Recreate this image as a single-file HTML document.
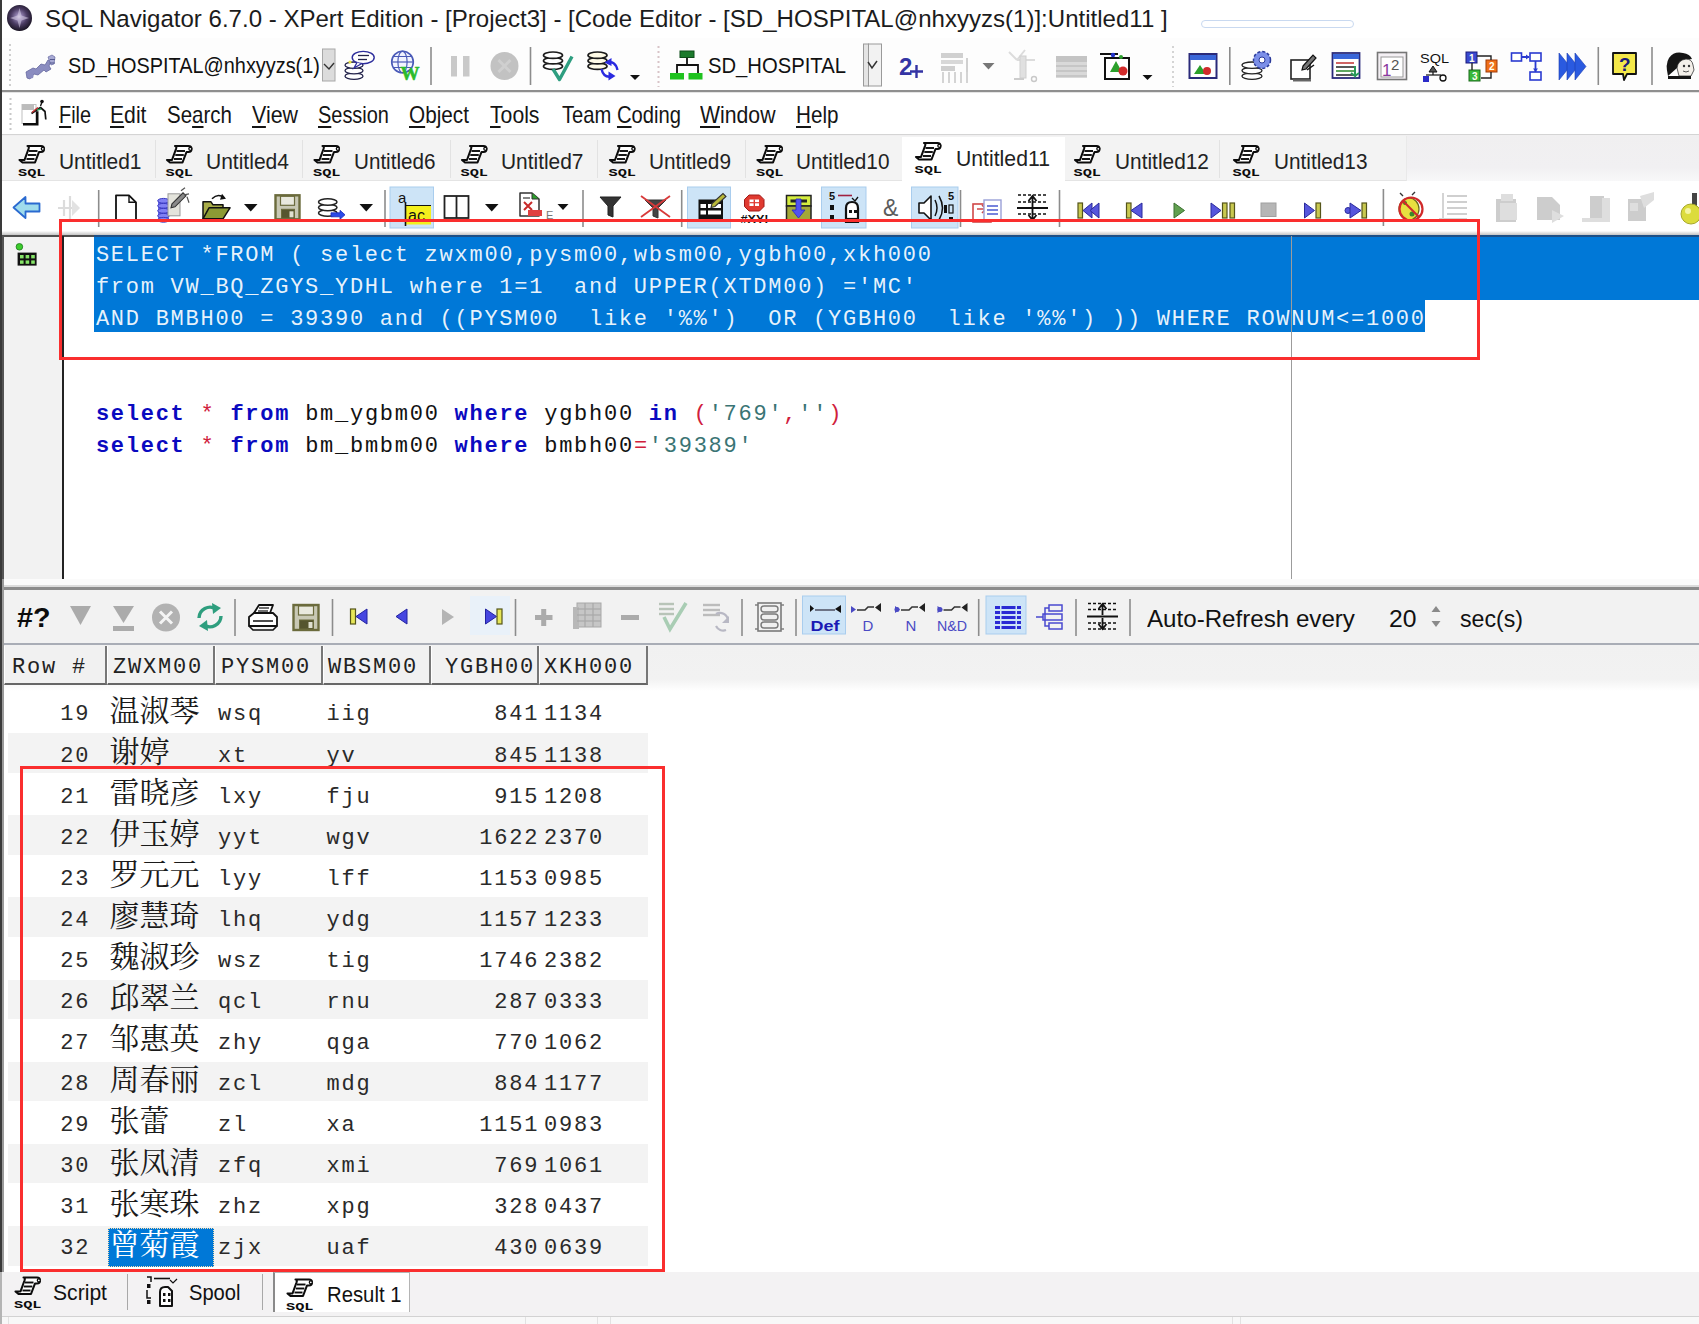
<!DOCTYPE html><html><head><meta charset="utf-8"><title>SQL Navigator</title><style>
*{box-sizing:border-box;margin:0;padding:0}
html,body{width:1699px;height:1324px;overflow:hidden;background:#fff}
body{position:relative;font-family:"Liberation Sans","Noto Sans CJK SC",sans-serif;color:#000}
.abs{position:absolute}
.t{position:absolute;white-space:pre;transform-origin:0 50%}
.code{position:absolute;white-space:pre;font-family:"Liberation Mono",monospace;font-size:22px;letter-spacing:1.74px;line-height:32px;height:32px;left:95.9px;color:#111}
.kw{color:#0a0ac0;font-weight:bold}
.op{color:#d0203c}
.st{color:#3a7474}
.sel{color:rgba(255,255,255,.92)}
u{text-decoration:underline;text-underline-offset:3px;text-decoration-thickness:1.5px}
.cell{position:absolute;white-space:pre;font-family:"Liberation Mono",monospace;font-size:22px;letter-spacing:1.8px;line-height:41px;height:41px;color:#2a2a2a}
.cn{font-family:"Liberation Serif","Noto Serif CJK SC",serif;font-size:30px;letter-spacing:0;color:#1a1a1a}
.hd{position:absolute;top:646px;height:39px;background:#f1f1f1;font-family:"Liberation Mono",monospace;font-size:22px;letter-spacing:1.8px;line-height:43.5px;white-space:pre;color:#222;border-right:2px solid #777;border-bottom:2px solid #666;border-left:1px solid #fff}
</style></head><body>
<div class="abs" style="left:0px;top:0px;width:1699px;height:38px;background:#fff;"></div>
<div class="abs" style="left:0px;top:38px;width:1699px;height:52px;background:#fdfdfd;"></div>
<div class="abs" style="left:0px;top:90px;width:1699px;height:2px;background:#8f8f8f;"></div>
<div class="abs" style="left:0px;top:92px;width:1699px;height:1px;background:#e4e4e4;"></div>
<div class="abs" style="left:0px;top:93px;width:1699px;height:42px;background:#fff;"></div>
<div class="abs" style="left:0px;top:133.5px;width:1699px;height:1.5px;background:#d4d4d4;"></div>
<div class="abs" style="left:0px;top:135px;width:1699px;height:45.5px;background:linear-gradient(#f0eff0,#f1f0f2 70%,#f8f8f9);"></div>
<div class="abs" style="left:0px;top:136px;width:1407px;height:44.5px;background:#f3f3f3;border-bottom:1px solid #e4e4e4;border-right:1px solid #e9e9e9"></div>
<div class="abs" style="left:155px;top:140px;width:1px;height:38px;background:#e2e2e2;"></div>
<div class="abs" style="left:302px;top:140px;width:1px;height:38px;background:#e2e2e2;"></div>
<div class="abs" style="left:450px;top:140px;width:1px;height:38px;background:#e2e2e2;"></div>
<div class="abs" style="left:597px;top:140px;width:1px;height:38px;background:#e2e2e2;"></div>
<div class="abs" style="left:745px;top:140px;width:1px;height:38px;background:#e2e2e2;"></div>
<div class="abs" style="left:1219px;top:140px;width:1px;height:38px;background:#e2e2e2;"></div>
<div class="abs" style="left:0px;top:181px;width:1699px;height:50px;background:#fff;"></div>
<div class="abs" style="left:7px;top:4.7px;width:25px;height:26.5px;border-radius:50%;background:radial-gradient(circle at 48% 45%,#cfc6de 0,#8f7fae 16%,#4a3b62 42%,#1c1626 72%,#0d0b12 100%)"></div>
<div class="t" style="left:44.5px;top:2.5px;font-size:24.5px;line-height:32px;transform:scaleX(0.9816);color:#1c1c1c">SQL Navigator 6.7.0 - XPert Edition - [Project3] - [Code Editor - [SD_HOSPITAL@nhxyyzs(1)]:Untitled11 ]</div>
<div class="abs" style="left:1201px;top:20px;width:153px;height:8px;border:1.5px solid #c9d9f0;border-radius:4px"></div>
<div class="t" style="left:68.2px;top:51.4px;font-size:22.6px;line-height:29px;transform:scaleX(0.8803);color:#111">SD_HOSPITAL@nhxyyzs(1)</div>
<div class="t" style="left:707.7px;top:51.4px;font-size:22.6px;line-height:29px;transform:scaleX(0.8957);color:#111">SD_HOSPITAL</div>
<div class="t" style="left:58.7px;top:99.5px;font-size:23.2px;line-height:30px;transform:scaleX(0.8560);color:#151515"><u>F</u>ile</div>
<div class="t" style="left:110.2px;top:99.5px;font-size:23.2px;line-height:30px;transform:scaleX(0.9130);color:#151515"><u>E</u>dit</div>
<div class="t" style="left:167.2px;top:99.5px;font-size:23.2px;line-height:30px;transform:scaleX(0.8842);color:#151515">Se<u>a</u>rch</div>
<div class="t" style="left:251.7px;top:99.5px;font-size:23.2px;line-height:30px;transform:scaleX(0.9224);color:#151515"><u>V</u>iew</div>
<div class="t" style="left:318.2px;top:99.5px;font-size:23.2px;line-height:30px;transform:scaleX(0.8602);color:#151515"><u>S</u>ession</div>
<div class="t" style="left:409.2px;top:99.5px;font-size:23.2px;line-height:30px;transform:scaleX(0.8948);color:#151515"><u>O</u>bject</div>
<div class="t" style="left:490.2px;top:99.5px;font-size:23.2px;line-height:30px;transform:scaleX(0.9139);color:#151515"><u>T</u>ools</div>
<div class="t" style="left:561.7px;top:99.5px;font-size:23.2px;line-height:30px;transform:scaleX(0.8705);color:#151515">Team <u>C</u>oding</div>
<div class="t" style="left:700.2px;top:99.5px;font-size:23.2px;line-height:30px;transform:scaleX(0.9150);color:#151515"><u>W</u>indow</div>
<div class="t" style="left:796.2px;top:99.5px;font-size:23.2px;line-height:30px;transform:scaleX(0.8907);color:#151515"><u>H</u>elp</div>
<div class="abs" style="left:902px;top:136.5px;width:163px;height:45px;background:#fff;"></div>
<div class="t" style="left:58.7px;top:147.9px;font-size:21.2px;line-height:28px;transform:scaleX(0.9860);color:#222">Untitled1</div>
<div class="t" style="left:206.2px;top:147.9px;font-size:21.2px;line-height:28px;transform:scaleX(0.9919);color:#222">Untitled4</div>
<div class="t" style="left:353.7px;top:147.9px;font-size:21.2px;line-height:28px;transform:scaleX(0.9740);color:#222">Untitled6</div>
<div class="t" style="left:501.2px;top:147.9px;font-size:21.2px;line-height:28px;transform:scaleX(0.9860);color:#222">Untitled7</div>
<div class="t" style="left:648.7px;top:147.9px;font-size:21.2px;line-height:28px;transform:scaleX(0.9800);color:#222">Untitled9</div>
<div class="t" style="left:796.2px;top:147.9px;font-size:21.2px;line-height:28px;transform:scaleX(0.9794);color:#222">Untitled10</div>
<div class="t" style="left:955.7px;top:144.9px;font-size:21.2px;line-height:28px;transform:scaleX(1.0012);color:#222">Untitled11</div>
<div class="t" style="left:1114.7px;top:147.9px;font-size:21.2px;line-height:28px;transform:scaleX(0.9847);color:#222">Untitled12</div>
<div class="t" style="left:1273.7px;top:147.9px;font-size:21.2px;line-height:28px;transform:scaleX(0.9794);color:#222">Untitled13</div>
<div class="abs" style="left:0px;top:230.5px;width:1699px;height:4px;background:linear-gradient(#fdfdfd,#c4c4c4);"></div>
<div class="abs" style="left:0px;top:234.5px;width:1699px;height:2.2px;background:#505050;"></div>
<div class="abs" style="left:2px;top:236.5px;width:61px;height:343px;background:#f2f2f2;"></div>
<div class="abs" style="left:1.5px;top:236px;width:2px;height:343px;background:#555;"></div>
<div class="abs" style="left:62.4px;top:236px;width:2px;height:343px;background:#222;"></div>
<div class="abs" style="left:64.4px;top:236.7px;width:1635px;height:342.3px;background:#fff;"></div>
<div class="abs" style="left:94px;top:236.5px;width:1605px;height:63.5px;background:#0078d7;"></div>
<div class="abs" style="left:94px;top:234.5px;width:1605px;height:2.2px;background:#1d4f86;"></div>
<div class="abs" style="left:94px;top:300px;width:1331px;height:32px;background:#0078d7;"></div>
<div class="abs" style="left:1291px;top:236px;width:1.3px;height:343px;background:#9c9c9c;"></div>
<div class="code" style="top:240.3px"><span class="sel">SELECT *FROM ( select zwxm00,pysm00,wbsm00,ygbh00,xkh000</span></div>
<div class="code" style="top:272.3px"><span class="sel">from VW_BQ_ZGYS_YDHL where 1=1  and UPPER(XTDM00) ='MC'</span></div>
<div class="code" style="top:304.3px"><span class="sel">AND BMBH00 = 39390 and ((PYSM00  like '%%')  OR (YGBH00  like '%%') )) WHERE ROWNUM&lt;=1000</span></div>
<div class="code" style="top:399.3px"><span class="kw">select</span> <span class="op">*</span> <span class="kw">from</span> bm_ygbm00 <span class="kw">where</span> ygbh00 <span class="kw">in</span> <span class="op">(</span><span class="st">'769'</span><span class="op">,</span><span class="st">''</span><span class="op">)</span></div>
<div class="code" style="top:431.3px"><span class="kw">select</span> <span class="op">*</span> <span class="kw">from</span> bm_bmbm00 <span class="kw">where</span> bmbh00<span class="op">=</span><span class="st">'39389'</span></div>
<div class="abs" style="left:0px;top:579px;width:1699px;height:6px;background:#fbfbfb;"></div>
<div class="abs" style="left:0px;top:585px;width:1699px;height:2px;background:#dcdcdc;"></div>
<div class="abs" style="left:0px;top:587px;width:1699px;height:2.5px;background:#8c8c8c;"></div>
<div class="abs" style="left:0px;top:589.5px;width:1699px;height:54px;background:#f2f2f2;"></div>
<div class="abs" style="left:0px;top:643px;width:1699px;height:2px;background:#a9adb6;"></div>
<div class="t" style="left:16.7px;top:599.7px;font-size:27.5px;line-height:36px;transform:scaleX(1.0438);font-weight:bold;color:#0c0c0c">#?</div>
<div class="t" style="left:1146.7px;top:604.4px;font-size:23.4px;line-height:30px;transform:scaleX(1.0318);color:#111">Auto-Refresh every</div>
<div class="t" style="left:1389.2px;top:603.9px;font-size:23.4px;line-height:30px;transform:scaleX(1.0565);color:#111">20</div>
<div class="t" style="left:1460.2px;top:604.4px;font-size:23.4px;line-height:30px;transform:scaleX(0.9890);color:#111">sec(s)</div>
<div class="abs" style="left:0px;top:645px;width:1699px;height:627px;background:#fff;"></div>
<div class="abs" style="left:0px;top:645px;width:1699px;height:46px;background:linear-gradient(#f1f1f1,#f2f2f2 74%,#fff);"></div>
<div class="hd" style="left:4px;width:103px;padding-left:7px">Row #</div>
<div class="hd" style="left:107px;width:108px;padding-left:5px">ZWXM00</div>
<div class="hd" style="left:215px;width:108px;padding-left:5px">PYSM00</div>
<div class="hd" style="left:323px;width:108px;padding-left:4px">WBSM00</div>
<div class="hd" style="left:431px;width:108px;padding-left:13px">YGBH00</div>
<div class="hd" style="left:539px;width:109px;padding-left:4px">XKH000</div>
<div class="cell" style="left:8px;width:82.3px;text-align:right;top:694.4px">19</div>
<div class="cell cn" style="left:109.5px;top:689.6px;">温淑琴</div>
<div class="cell" style="left:218px;top:694.4px">wsq</div>
<div class="cell" style="left:326.5px;top:694.4px">iig</div>
<div class="cell" style="left:431px;width:108.3px;text-align:right;top:694.4px">841</div>
<div class="cell" style="left:544px;top:694.4px">1134</div>
<div class="abs" style="left:8px;top:733.1px;width:640px;height:39.5px;background:#f3f3f3;"></div>
<div class="cell" style="left:8px;width:82.3px;text-align:right;top:735.5px">20</div>
<div class="cell cn" style="left:109.5px;top:730.7px;">谢婷</div>
<div class="cell" style="left:218px;top:735.5px">xt</div>
<div class="cell" style="left:326.5px;top:735.5px">yv</div>
<div class="cell" style="left:431px;width:108.3px;text-align:right;top:735.5px">845</div>
<div class="cell" style="left:544px;top:735.5px">1138</div>
<div class="cell" style="left:8px;width:82.3px;text-align:right;top:776.6px">21</div>
<div class="cell cn" style="left:109.5px;top:771.8px;">雷晓彦</div>
<div class="cell" style="left:218px;top:776.6px">lxy</div>
<div class="cell" style="left:326.5px;top:776.6px">fju</div>
<div class="cell" style="left:431px;width:108.3px;text-align:right;top:776.6px">915</div>
<div class="cell" style="left:544px;top:776.6px">1208</div>
<div class="abs" style="left:8px;top:815.2px;width:640px;height:39.5px;background:#f3f3f3;"></div>
<div class="cell" style="left:8px;width:82.3px;text-align:right;top:817.6px">22</div>
<div class="cell cn" style="left:109.5px;top:812.8px;">伊玉婷</div>
<div class="cell" style="left:218px;top:817.6px">yyt</div>
<div class="cell" style="left:326.5px;top:817.6px">wgv</div>
<div class="cell" style="left:431px;width:108.3px;text-align:right;top:817.6px">1622</div>
<div class="cell" style="left:544px;top:817.6px">2370</div>
<div class="cell" style="left:8px;width:82.3px;text-align:right;top:858.7px">23</div>
<div class="cell cn" style="left:109.5px;top:853.9px;">罗元元</div>
<div class="cell" style="left:218px;top:858.7px">lyy</div>
<div class="cell" style="left:326.5px;top:858.7px">lff</div>
<div class="cell" style="left:431px;width:108.3px;text-align:right;top:858.7px">1153</div>
<div class="cell" style="left:544px;top:858.7px">0985</div>
<div class="abs" style="left:8px;top:897.4px;width:640px;height:39.5px;background:#f3f3f3;"></div>
<div class="cell" style="left:8px;width:82.3px;text-align:right;top:899.8px">24</div>
<div class="cell cn" style="left:109.5px;top:895.0px;">廖慧琦</div>
<div class="cell" style="left:218px;top:899.8px">lhq</div>
<div class="cell" style="left:326.5px;top:899.8px">ydg</div>
<div class="cell" style="left:431px;width:108.3px;text-align:right;top:899.8px">1157</div>
<div class="cell" style="left:544px;top:899.8px">1233</div>
<div class="cell" style="left:8px;width:82.3px;text-align:right;top:940.9px">25</div>
<div class="cell cn" style="left:109.5px;top:936.1px;">魏淑珍</div>
<div class="cell" style="left:218px;top:940.9px">wsz</div>
<div class="cell" style="left:326.5px;top:940.9px">tig</div>
<div class="cell" style="left:431px;width:108.3px;text-align:right;top:940.9px">1746</div>
<div class="cell" style="left:544px;top:940.9px">2382</div>
<div class="abs" style="left:8px;top:979.6px;width:640px;height:39.5px;background:#f3f3f3;"></div>
<div class="cell" style="left:8px;width:82.3px;text-align:right;top:982.0px">26</div>
<div class="cell cn" style="left:109.5px;top:977.2px;">邱翠兰</div>
<div class="cell" style="left:218px;top:982.0px">qcl</div>
<div class="cell" style="left:326.5px;top:982.0px">rnu</div>
<div class="cell" style="left:431px;width:108.3px;text-align:right;top:982.0px">287</div>
<div class="cell" style="left:544px;top:982.0px">0333</div>
<div class="cell" style="left:8px;width:82.3px;text-align:right;top:1023.0px">27</div>
<div class="cell cn" style="left:109.5px;top:1018.2px;">邹惠英</div>
<div class="cell" style="left:218px;top:1023.0px">zhy</div>
<div class="cell" style="left:326.5px;top:1023.0px">qga</div>
<div class="cell" style="left:431px;width:108.3px;text-align:right;top:1023.0px">770</div>
<div class="cell" style="left:544px;top:1023.0px">1062</div>
<div class="abs" style="left:8px;top:1061.7px;width:640px;height:39.5px;background:#f3f3f3;"></div>
<div class="cell" style="left:8px;width:82.3px;text-align:right;top:1064.1px">28</div>
<div class="cell cn" style="left:109.5px;top:1059.3px;">周春丽</div>
<div class="cell" style="left:218px;top:1064.1px">zcl</div>
<div class="cell" style="left:326.5px;top:1064.1px">mdg</div>
<div class="cell" style="left:431px;width:108.3px;text-align:right;top:1064.1px">884</div>
<div class="cell" style="left:544px;top:1064.1px">1177</div>
<div class="cell" style="left:8px;width:82.3px;text-align:right;top:1105.2px">29</div>
<div class="cell cn" style="left:109.5px;top:1100.4px;">张蕾</div>
<div class="cell" style="left:218px;top:1105.2px">zl</div>
<div class="cell" style="left:326.5px;top:1105.2px">xa</div>
<div class="cell" style="left:431px;width:108.3px;text-align:right;top:1105.2px">1151</div>
<div class="cell" style="left:544px;top:1105.2px">0983</div>
<div class="abs" style="left:8px;top:1143.9px;width:640px;height:39.5px;background:#f3f3f3;"></div>
<div class="cell" style="left:8px;width:82.3px;text-align:right;top:1146.3px">30</div>
<div class="cell cn" style="left:109.5px;top:1141.5px;">张凤清</div>
<div class="cell" style="left:218px;top:1146.3px">zfq</div>
<div class="cell" style="left:326.5px;top:1146.3px">xmi</div>
<div class="cell" style="left:431px;width:108.3px;text-align:right;top:1146.3px">769</div>
<div class="cell" style="left:544px;top:1146.3px">1061</div>
<div class="cell" style="left:8px;width:82.3px;text-align:right;top:1187.4px">31</div>
<div class="cell cn" style="left:109.5px;top:1182.6px;">张寒珠</div>
<div class="cell" style="left:218px;top:1187.4px">zhz</div>
<div class="cell" style="left:326.5px;top:1187.4px">xpg</div>
<div class="cell" style="left:431px;width:108.3px;text-align:right;top:1187.4px">328</div>
<div class="cell" style="left:544px;top:1187.4px">0437</div>
<div class="abs" style="left:8px;top:1226.0px;width:640px;height:39.5px;background:#f3f3f3;"></div>
<div class="abs" style="left:107.8px;top:1227.6px;width:105.8px;height:39.2px;background:#0078d7;outline:1px dotted #f6e0b0;outline-offset:-1px"></div>
<div class="cell" style="left:8px;width:82.3px;text-align:right;top:1228.4px">32</div>
<div class="cell cn" style="left:109.5px;top:1223.6px;color:#fff;">曾菊霞</div>
<div class="cell" style="left:218px;top:1228.4px">zjx</div>
<div class="cell" style="left:326.5px;top:1228.4px">uaf</div>
<div class="cell" style="left:431px;width:108.3px;text-align:right;top:1228.4px">430</div>
<div class="cell" style="left:544px;top:1228.4px">0639</div>
<div class="abs" style="left:0px;top:1272px;width:1699px;height:40px;background:#f3f2f3;"></div>
<div class="abs" style="left:272.5px;top:1272px;width:137px;height:40px;background:#fff;border:1px solid #b4b4b4;border-bottom:none;border-left:2px solid #8a8a8a"></div>
<div class="t" style="left:52.7px;top:1278.4px;font-size:22.3px;line-height:29px;transform:scaleX(0.9473);color:#111">Script</div>
<div class="t" style="left:189.2px;top:1278.4px;font-size:22.3px;line-height:29px;transform:scaleX(0.9029);color:#111">Spool</div>
<div class="t" style="left:326.7px;top:1279.9px;font-size:22.3px;line-height:29px;transform:scaleX(0.9107);color:#111">Result 1</div>
<div class="abs" style="left:126.5px;top:1274px;width:1.2px;height:36px;background:#a8a8a8;"></div>
<div class="abs" style="left:261.5px;top:1274px;width:1.2px;height:36px;background:#a8a8a8;"></div>
<div class="abs" style="left:0px;top:1312px;width:1699px;height:12px;background:#f3f2f3;"></div>
<div class="abs" style="left:0px;top:1315.5px;width:1699px;height:1px;background:#d2d2d2;"></div>
<div class="abs" style="left:0px;top:1316.5px;width:1699px;height:7.5px;background:#f8f8f8;"></div>
<div class="abs" style="left:8px;top:1317px;width:1px;height:7px;background:#e2e2e2;"></div>
<div class="abs" style="left:525px;top:1317px;width:1px;height:7px;background:#e2e2e2;"></div>
<div class="abs" style="left:597px;top:1317px;width:1px;height:7px;background:#e2e2e2;"></div>
<div class="abs" style="left:610px;top:1317px;width:1px;height:7px;background:#e2e2e2;"></div>
<div class="abs" style="left:1232px;top:1317px;width:1px;height:7px;background:#e2e2e2;"></div>
<div class="abs" style="left:1240px;top:1317px;width:1px;height:7px;background:#e2e2e2;"></div>
<div class="abs" style="left:0px;top:0px;width:1.5px;height:1272px;background:#3a3a3a;"></div>
<div class="abs" style="left:0px;top:1272px;width:1.5px;height:52px;background:#b4b4b4;"></div>
<div class="abs" style="left:1.5px;top:579px;width:2.5px;height:693px;background:#9a9a9a;"></div>
<svg class="abs" style="left:0;top:0" width="1699" height="1324" viewBox="0 0 1699 1324"><path d="M19.5 8l2 7.5 7.5 2.5-7.5 2.5-2 7.5-2-7.5-7.5-2.5 7.5-2.5z" fill="#d9d0e8" stroke="none" stroke-width="0" opacity="0.55"/><line x1="10" y1="44" x2="10" y2="88" stroke="#cfcfcf" stroke-width="2" stroke-dasharray="2 3"/><path d="M26 72l7-4 3 1 5-5 4 1 3-5 3 1-2 5 2 3-5 3-2-2-6 5-4-1-4 5-3-1z" fill="#8a8cc0" stroke="#6668a0" stroke-width="0.8" /><path d="M48 57l4-2 3 2-1 7-3 1z" fill="#a8aad4" stroke="#6668a0" stroke-width="0.7" /><line x1="50" y1="59.5" x2="55" y2="59.5" stroke="#555a90" stroke-width="1" /><line x1="50" y1="63" x2="55" y2="63" stroke="#555a90" stroke-width="1" /><circle cx="31" cy="76" r="2.5" fill="#8a8cc0" stroke="none" stroke-width="1" /><rect x="322.5" y="49" width="12.5" height="32" fill="#dcdcdc" stroke="#a8a8a8" stroke-width="1" /><path d="M324 64l5 5 5-6" fill="none" stroke="#333" stroke-width="1.4" /><ellipse cx="354.0" cy="76.2" rx="9.0" ry="3.2" fill="#fff" stroke="#22224a" stroke-width="1.3" /><ellipse cx="354.0" cy="70.7" rx="9.0" ry="3.2" fill="#fff" stroke="#22224a" stroke-width="1.3" /><ellipse cx="354.0" cy="65.2" rx="9.0" ry="3.2" fill="#fff" stroke="#22224a" stroke-width="1.3" /><circle cx="350" cy="62" r="1.6" fill="#e8e040" stroke="none" stroke-width="1" /><ellipse cx="363.2" cy="57.6" rx="11" ry="6.2" fill="#fff" stroke="#2d2d9c" stroke-width="1.4" /><path d="M357 62.5l-3 5.5 7-4" fill="#fff" stroke="#2d2d9c" stroke-width="1.3" /><line x1="358" y1="55.5" x2="369" y2="55.5" stroke="#22224a" stroke-width="1.3" /><line x1="358" y1="59.5" x2="367" y2="59.5" stroke="#22224a" stroke-width="1.3" /><circle cx="402.5" cy="62" r="10.8" fill="#f2f4ff" stroke="#4a5ab8" stroke-width="1.6" /><ellipse cx="402.5" cy="62" rx="4.6" ry="10.8" fill="none" stroke="#4a5ab8" stroke-width="1.2" /><line x1="391.7" y1="62" x2="413.3" y2="62" stroke="#4a5ab8" stroke-width="1.2" /><line x1="393" y1="56.5" x2="412" y2="56.5" stroke="#4a5ab8" stroke-width="1" /><line x1="393" y1="67.5" x2="412" y2="67.5" stroke="#4a5ab8" stroke-width="1" /><text x="400.5" y="80" font-size="19" fill="#2cbc2c" font-family="Liberation Serif, serif" font-weight="bold" stroke="#2cbc2c" stroke-width="0.5">W</text><line x1="431" y1="47" x2="431" y2="85" stroke="#8c8c8c" stroke-width="1.6" /><rect x="451" y="56" width="6" height="20.5" fill="#c9c9c9" stroke="none" stroke-width="1" /><rect x="463" y="56" width="6.5" height="20.5" fill="#c9c9c9" stroke="none" stroke-width="1" /><circle cx="504.5" cy="66" r="14" fill="#c2c2c2" stroke="none" stroke-width="1" /><path d="M498.5 60l12 12M510.5 60l-12 12" fill="none" stroke="#cfcfcf" stroke-width="3" /><line x1="530.5" y1="47" x2="530.5" y2="85" stroke="#8c8c8c" stroke-width="1.6" /><ellipse cx="553.0" cy="66.2" rx="9.5" ry="3.2" fill="#fff" stroke="#1c1c1c" stroke-width="1.7" /><ellipse cx="553.0" cy="60.7" rx="9.5" ry="3.2" fill="#fff" stroke="#1c1c1c" stroke-width="1.7" /><ellipse cx="553.0" cy="55.2" rx="9.5" ry="3.2" fill="#fff" stroke="#1c1c1c" stroke-width="1.7" /><path d="M553 69l6.5 10.5 12.5-23" fill="none" stroke="#2e9e80" stroke-width="3.4" stroke-linejoin="round"/><ellipse cx="597.5" cy="66.2" rx="9.5" ry="3.2" fill="#fffbe6" stroke="#1c1c1c" stroke-width="1.7" /><ellipse cx="597.5" cy="60.7" rx="9.5" ry="3.2" fill="#fffbe6" stroke="#1c1c1c" stroke-width="1.7" /><ellipse cx="597.5" cy="55.2" rx="9.5" ry="3.2" fill="#fffbe6" stroke="#1c1c1c" stroke-width="1.7" /><path d="M607 63q8-3 10.5 7" fill="none" stroke="#2a2ae0" stroke-width="2.4" /><path d="M604.5 62.5l7-4.5 0 8z" fill="#2a2ae0" stroke="none" stroke-width="1" /><path d="M601.5 69q2 9 10 7.5" fill="none" stroke="#2a2ae0" stroke-width="2.4" /><path d="M615.5 76l-7-4.5 0 9z" fill="#2a2ae0" stroke="none" stroke-width="1" /><path d="M630 75h10l-5.0 5z" fill="#111" stroke="none" stroke-width="1" /><line x1="658.5" y1="46" x2="658.5" y2="87" stroke="#d8c4c8" stroke-width="2" stroke-dasharray="2 3"/><rect x="680" y="51" width="14" height="6.5" fill="#1c7a2c" stroke="#0d4d18" stroke-width="1" /><path d="M687 58v7M677 73v-8h21v8" fill="none" stroke="#111" stroke-width="1.8" /><rect x="670" y="73" width="14" height="6.5" fill="#1fc21f" stroke="none" stroke-width="1" /><rect x="688.5" y="73" width="14" height="6.5" fill="#1fc21f" stroke="none" stroke-width="1" /><rect x="863.5" y="44" width="5" height="42" fill="#e4e4e4" stroke="#9a9a9a" stroke-width="1" /><rect x="868.5" y="44" width="13" height="42" fill="#f2f2f2" stroke="#9a9a9a" stroke-width="1" /><path d="M868 62l4 6 5-7" fill="none" stroke="#333" stroke-width="1.5" /><text x="899" y="75" font-size="24" fill="#3434a4" font-family="Liberation Sans, sans-serif" font-weight="bold">2</text><path d="M910 71.5h13M916.5 65v13" fill="none" stroke="#3434a4" stroke-width="2.4" /><rect x="941" y="53" width="22" height="5" fill="#d0d0d0" stroke="none" stroke-width="1" /><rect x="941" y="60" width="22" height="4" fill="#d8d8d8" stroke="none" stroke-width="1" /><rect x="941" y="66" width="14" height="5" fill="#cfcfcf" stroke="none" stroke-width="1" /><line x1="943" y1="72" x2="943" y2="83" stroke="#d4d4d4" stroke-width="2" /><line x1="949" y1="72" x2="949" y2="83" stroke="#d4d4d4" stroke-width="2" /><line x1="955" y1="72" x2="955" y2="83" stroke="#d4d4d4" stroke-width="2" /><line x1="961" y1="72" x2="961" y2="83" stroke="#d4d4d4" stroke-width="2" /><line x1="967" y1="72" x2="967" y2="83" stroke="#d4d4d4" stroke-width="2" /><line x1="967" y1="58" x2="967" y2="72" stroke="#d0d0d0" stroke-width="2" /><path d="M982.5 63h12l-6.0 6.5z" fill="#777" stroke="none" stroke-width="1" /><path d="M1009 52l8 8M1025 50l-8 10M1017 60h18" fill="none" stroke="#dcdcdc" stroke-width="2" /><rect x="1020" y="56" width="6" height="22" fill="#e0e0e0" stroke="#cfcfcf" stroke-width="1" /><circle cx="1034" cy="79" r="2.5" fill="none" stroke="#c8c8c8" stroke-width="1.4" /><line x1="1014" y1="79" x2="1024" y2="79" stroke="#ccc" stroke-width="2" /><rect x="1056" y="56" width="31" height="22" fill="#d9d9d9" stroke="none" stroke-width="1" /><rect x="1056" y="56" width="31" height="6" fill="#c4c4c4" stroke="none" stroke-width="1" /><line x1="1056" y1="66" x2="1087" y2="66" stroke="#bdbdbd" stroke-width="1.4" /><line x1="1056" y1="71" x2="1087" y2="71" stroke="#bdbdbd" stroke-width="1.4" /><line x1="1056" y1="76" x2="1087" y2="76" stroke="#bdbdbd" stroke-width="1.4" /><rect x="1105" y="58" width="24" height="21" fill="#fff" stroke="#111" stroke-width="2" /><path d="M1100 54h18" fill="none" stroke="#111" stroke-width="2" /><path d="M1110 72l6-11 6 11z" fill="#2ca02c" stroke="none" stroke-width="1" /><circle cx="1123" cy="71" r="4.5" fill="#d12a2a" stroke="none" stroke-width="1" /><circle cx="1113" cy="55" r="2.2" fill="#2233cc" stroke="none" stroke-width="1" /><circle cx="1121" cy="57" r="2" fill="#2ca02c" stroke="none" stroke-width="1" /><path d="M1142.5 75h10l-5.0 5z" fill="#111" stroke="none" stroke-width="1" /><line x1="1173" y1="46" x2="1173" y2="87" stroke="#d4d4d4" stroke-width="2" stroke-dasharray="2 3"/><rect x="1189.5" y="54" width="27" height="24" fill="#fff" stroke="#2a2a7a" stroke-width="2" /><rect x="1190" y="55" width="26" height="5" fill="#3a66d8" stroke="none" stroke-width="1" /><path d="M1194 74l6-9 6 9z" fill="#2ca02c" stroke="none" stroke-width="1" /><circle cx="1207" cy="71" r="4" fill="#d12a2a" stroke="none" stroke-width="1" /><line x1="1229.8" y1="47" x2="1229.8" y2="85" stroke="#8c8c8c" stroke-width="1.6" /><ellipse cx="1252.0" cy="76.2" rx="10.0" ry="3.2" fill="#fff" stroke="#222" stroke-width="1.3" /><ellipse cx="1252.0" cy="70.7" rx="10.0" ry="3.2" fill="#fff" stroke="#222" stroke-width="1.3" /><ellipse cx="1252.0" cy="65.2" rx="10.0" ry="3.2" fill="#fff" stroke="#222" stroke-width="1.3" /><circle cx="1262" cy="60" r="8.5" fill="#7b8fe8" stroke="#2a3a9a" stroke-width="1.5" stroke-dasharray="3 2"/><circle cx="1262" cy="60" r="3" fill="#fff" stroke="#2a3a9a" stroke-width="1" /><rect x="1291" y="60" width="19" height="19" fill="#fff" stroke="#222" stroke-width="1.6" /><line x1="1293" y1="80.5" x2="1311" y2="80.5" stroke="#666" stroke-width="2" /><path d="M1303 66l10-11 3 3-10 11-4 1z" fill="#777" stroke="#111" stroke-width="1.2" /><path d="M1307 70l7-5" fill="none" stroke="#111" stroke-width="1.5" /><rect x="1332.5" y="53" width="27" height="25" fill="#fff" stroke="#2a2a7a" stroke-width="1.8" /><rect x="1333" y="54" width="26" height="5" fill="#3a66d8" stroke="none" stroke-width="1" /><line x1="1336" y1="63" x2="1354" y2="63" stroke="#c03030" stroke-width="1.5" /><line x1="1336" y1="67" x2="1354" y2="67" stroke="#222" stroke-width="1.5" /><line x1="1336" y1="71" x2="1354" y2="71" stroke="#2a8a2a" stroke-width="1.5" /><line x1="1336" y1="75" x2="1354" y2="75" stroke="#222" stroke-width="1.5" /><path d="M1355 66v10l-4-3M1355 76l4-3" fill="none" stroke="#2a9a5a" stroke-width="2" /><rect x="1377.5" y="52.5" width="29" height="27" fill="#f4f0f4" stroke="#777" stroke-width="1.6" /><rect x="1381" y="57" width="22" height="20" fill="#fff" stroke="#999" stroke-width="1" /><text x="1382" y="76" font-size="17" fill="#8a3aa0" font-family="Liberation Sans, sans-serif" >1</text><text x="1391" y="70" font-size="15" fill="#555" font-family="Liberation Sans, sans-serif" >2</text><text x="1420" y="62.5" font-size="12.5" fill="#111" font-family="Liberation Sans, sans-serif" textLength="29" lengthAdjust="spacingAndGlyphs">SQL</text><path d="M1433 66l4 6h-8z" fill="#555" stroke="#111" stroke-width="1" /><line x1="1433" y1="72" x2="1433" y2="75" stroke="#111" stroke-width="1.2" /><line x1="1426" y1="75" x2="1441" y2="75" stroke="#111" stroke-width="1.2" /><rect x="1423" y="76" width="6" height="6" fill="#2a2ac8" stroke="none" stroke-width="1" /><circle cx="1443" cy="78" r="3" fill="#fff" stroke="#111" stroke-width="1.3" /><rect x="1466" y="52" width="11" height="11" fill="#3a4ad0" stroke="#1a1a7a" stroke-width="1" /><text x="1469" y="61.5" font-size="10" fill="#ffe" font-family="Liberation Sans, sans-serif" font-weight="bold">1</text><rect x="1486" y="60" width="11" height="12" fill="#f07018" stroke="#a03a08" stroke-width="1" /><text x="1489" y="70" font-size="10" fill="#ffe" font-family="Liberation Sans, sans-serif" font-weight="bold">2</text><rect x="1469" y="70" width="11" height="11" fill="#3ab83a" stroke="#1a6a1a" stroke-width="1" /><text x="1472" y="79.5" font-size="10" fill="#ffe" font-family="Liberation Sans, sans-serif" font-weight="bold">3</text><path d="M1477 56h14v4M1472 63v7M1491 72v6h-10" fill="none" stroke="#222" stroke-width="1.4" /><rect x="1511.5" y="53" width="10" height="8" fill="#fff" stroke="#2a3ad0" stroke-width="1.6" /><rect x="1530" y="53" width="11" height="8" fill="#fff" stroke="#2a3ad0" stroke-width="1.6" /><rect x="1530" y="72" width="11" height="8" fill="#fff" stroke="#2a3ad0" stroke-width="1.6" /><path d="M1522 57h7M1535.5 61v11" fill="none" stroke="#2a3ad0" stroke-width="1.8" /><path d="M1526 54.5l3.5 2.5-3.5 2.5zM1533 68.5l2.5 3.5 2.5-3.5z" fill="#2a3ad0" stroke="none" stroke-width="1" /><path d="M1559 53l11 13.5-11 13.5z" fill="#2a5ae0" stroke="#1a3ab0" stroke-width="0.6" /><path d="M1567 53l11 13.5-11 13.5z" fill="#2a5ae0" stroke="#1a3ab0" stroke-width="0.6" /><path d="M1575 53l11 13.5-11 13.5z" fill="#2a5ae0" stroke="#1a3ab0" stroke-width="0.6" /><line x1="1598.3" y1="47" x2="1598.3" y2="85" stroke="#8c8c8c" stroke-width="1.6" /><path d="M1613 53h23v21h-9l-3 6-1-6h-10z" fill="#f4e84a" stroke="#111" stroke-width="1.8" stroke-linejoin="round"/><text x="1619" y="71" font-size="19" fill="#1a1a7a" font-family="Liberation Sans, sans-serif" font-weight="bold">?</text><line x1="1652" y1="47" x2="1652" y2="85" stroke="#8c8c8c" stroke-width="1.6" /><path d="M1668 76q-3-12 1-18q5-7 14-5q7 1 9 6l-6 1q-8 1-9 8z" fill="#151515" stroke="none" stroke-width="1" /><path d="M1677 68q1-8 9-9q6 0 7 6l1 5-3 6h-12z" fill="#f4f0ea" stroke="#333" stroke-width="0.8" /><circle cx="1684" cy="66" r="1.2" fill="#333" stroke="none" stroke-width="1" /><circle cx="1689" cy="66" r="1.2" fill="#333" stroke="none" stroke-width="1" /><path d="M1683 71q3 2 6 0" fill="none" stroke="#555" stroke-width="1" /><rect x="1668" y="76" width="23" height="3" fill="#151515" stroke="none" stroke-width="1" /><line x1="10.5" y1="98" x2="10.5" y2="130" stroke="#c8c8c8" stroke-width="2" stroke-dasharray="2 3"/><rect x="22" y="104.5" width="14" height="19" fill="#fff" stroke="#c0c0c0" stroke-width="1" /><rect x="22" y="104.5" width="12" height="5.5" fill="#bcbcbc" stroke="none" stroke-width="1" /><path d="M23 124.3h14.2v-13" fill="none" stroke="#0c0c0c" stroke-width="2.6" /><path d="M31.5 113.5l9-6 4.5 4 0.8 8" fill="none" stroke="#111" stroke-width="1.7" stroke-linejoin="round"/><line x1="32" y1="112.5" x2="38" y2="107.5" stroke="#c03030" stroke-width="1.6" /><line x1="37" y1="110" x2="41" y2="109" stroke="#2ca05c" stroke-width="1.4" /><circle cx="42" cy="101.5" r="1.8" fill="#0c0c0c" stroke="none" stroke-width="1" /><line x1="42" y1="102" x2="40.5" y2="106" stroke="#111" stroke-width="1.4" /><path d="M27.5 146h13.5q3 0 3 3t-3 3h-2l-4 10.5h-12.5l-3-2.5h5l4-11q1-3-1-3z" fill="#fff" stroke="#0c0c0c" stroke-width="2.1" stroke-linejoin="round"/><circle cx="42.8" cy="148.8" r="1.5" fill="#fff" stroke="#0c0c0c" stroke-width="1.3" /><line x1="29.0" y1="151" x2="37.5" y2="151" stroke="#0c0c0c" stroke-width="1.9" /><line x1="27.8" y1="155" x2="36.3" y2="155" stroke="#0c0c0c" stroke-width="1.9" /><line x1="26.5" y1="159" x2="34.5" y2="159" stroke="#0c0c0c" stroke-width="1.9" /><text x="18.0" y="176" font-size="10.5" fill="#0c0c0c" font-family="Liberation Mono, monospace" font-weight="bold" textLength="27.5" lengthAdjust="spacingAndGlyphs">SQL</text><path d="M175 146h13.5q3 0 3 3t-3 3h-2l-4 10.5h-12.5l-3-2.5h5l4-11q1-3-1-3z" fill="#fff" stroke="#0c0c0c" stroke-width="2.1" stroke-linejoin="round"/><circle cx="190.3" cy="148.8" r="1.5" fill="#fff" stroke="#0c0c0c" stroke-width="1.3" /><line x1="176.5" y1="151" x2="185" y2="151" stroke="#0c0c0c" stroke-width="1.9" /><line x1="175.3" y1="155" x2="183.8" y2="155" stroke="#0c0c0c" stroke-width="1.9" /><line x1="174" y1="159" x2="182" y2="159" stroke="#0c0c0c" stroke-width="1.9" /><text x="165.5" y="176" font-size="10.5" fill="#0c0c0c" font-family="Liberation Mono, monospace" font-weight="bold" textLength="27.5" lengthAdjust="spacingAndGlyphs">SQL</text><path d="M322.5 146h13.5q3 0 3 3t-3 3h-2l-4 10.5h-12.5l-3-2.5h5l4-11q1-3-1-3z" fill="#fff" stroke="#0c0c0c" stroke-width="2.1" stroke-linejoin="round"/><circle cx="337.8" cy="148.8" r="1.5" fill="#fff" stroke="#0c0c0c" stroke-width="1.3" /><line x1="324.0" y1="151" x2="332.5" y2="151" stroke="#0c0c0c" stroke-width="1.9" /><line x1="322.8" y1="155" x2="331.3" y2="155" stroke="#0c0c0c" stroke-width="1.9" /><line x1="321.5" y1="159" x2="329.5" y2="159" stroke="#0c0c0c" stroke-width="1.9" /><text x="313.0" y="176" font-size="10.5" fill="#0c0c0c" font-family="Liberation Mono, monospace" font-weight="bold" textLength="27.5" lengthAdjust="spacingAndGlyphs">SQL</text><path d="M470 146h13.5q3 0 3 3t-3 3h-2l-4 10.5h-12.5l-3-2.5h5l4-11q1-3-1-3z" fill="#fff" stroke="#0c0c0c" stroke-width="2.1" stroke-linejoin="round"/><circle cx="485.3" cy="148.8" r="1.5" fill="#fff" stroke="#0c0c0c" stroke-width="1.3" /><line x1="471.5" y1="151" x2="480" y2="151" stroke="#0c0c0c" stroke-width="1.9" /><line x1="470.3" y1="155" x2="478.8" y2="155" stroke="#0c0c0c" stroke-width="1.9" /><line x1="469" y1="159" x2="477" y2="159" stroke="#0c0c0c" stroke-width="1.9" /><text x="460.5" y="176" font-size="10.5" fill="#0c0c0c" font-family="Liberation Mono, monospace" font-weight="bold" textLength="27.5" lengthAdjust="spacingAndGlyphs">SQL</text><path d="M618 146h13.5q3 0 3 3t-3 3h-2l-4 10.5h-12.5l-3-2.5h5l4-11q1-3-1-3z" fill="#fff" stroke="#0c0c0c" stroke-width="2.1" stroke-linejoin="round"/><circle cx="633.3" cy="148.8" r="1.5" fill="#fff" stroke="#0c0c0c" stroke-width="1.3" /><line x1="619.5" y1="151" x2="628" y2="151" stroke="#0c0c0c" stroke-width="1.9" /><line x1="618.3" y1="155" x2="626.8" y2="155" stroke="#0c0c0c" stroke-width="1.9" /><line x1="617" y1="159" x2="625" y2="159" stroke="#0c0c0c" stroke-width="1.9" /><text x="608.5" y="176" font-size="10.5" fill="#0c0c0c" font-family="Liberation Mono, monospace" font-weight="bold" textLength="27.5" lengthAdjust="spacingAndGlyphs">SQL</text><path d="M765.5 146h13.5q3 0 3 3t-3 3h-2l-4 10.5h-12.5l-3-2.5h5l4-11q1-3-1-3z" fill="#fff" stroke="#0c0c0c" stroke-width="2.1" stroke-linejoin="round"/><circle cx="780.8" cy="148.8" r="1.5" fill="#fff" stroke="#0c0c0c" stroke-width="1.3" /><line x1="767.0" y1="151" x2="775.5" y2="151" stroke="#0c0c0c" stroke-width="1.9" /><line x1="765.8" y1="155" x2="774.3" y2="155" stroke="#0c0c0c" stroke-width="1.9" /><line x1="764.5" y1="159" x2="772.5" y2="159" stroke="#0c0c0c" stroke-width="1.9" /><text x="756.0" y="176" font-size="10.5" fill="#0c0c0c" font-family="Liberation Mono, monospace" font-weight="bold" textLength="27.5" lengthAdjust="spacingAndGlyphs">SQL</text><path d="M1083 146h13.5q3 0 3 3t-3 3h-2l-4 10.5h-12.5l-3-2.5h5l4-11q1-3-1-3z" fill="#fff" stroke="#0c0c0c" stroke-width="2.1" stroke-linejoin="round"/><circle cx="1098.3" cy="148.8" r="1.5" fill="#fff" stroke="#0c0c0c" stroke-width="1.3" /><line x1="1084.5" y1="151" x2="1093" y2="151" stroke="#0c0c0c" stroke-width="1.9" /><line x1="1083.3" y1="155" x2="1091.8" y2="155" stroke="#0c0c0c" stroke-width="1.9" /><line x1="1082" y1="159" x2="1090" y2="159" stroke="#0c0c0c" stroke-width="1.9" /><text x="1073.5" y="176" font-size="10.5" fill="#0c0c0c" font-family="Liberation Mono, monospace" font-weight="bold" textLength="27.5" lengthAdjust="spacingAndGlyphs">SQL</text><path d="M1242 146h13.5q3 0 3 3t-3 3h-2l-4 10.5h-12.5l-3-2.5h5l4-11q1-3-1-3z" fill="#fff" stroke="#0c0c0c" stroke-width="2.1" stroke-linejoin="round"/><circle cx="1257.3" cy="148.8" r="1.5" fill="#fff" stroke="#0c0c0c" stroke-width="1.3" /><line x1="1243.5" y1="151" x2="1252" y2="151" stroke="#0c0c0c" stroke-width="1.9" /><line x1="1242.3" y1="155" x2="1250.8" y2="155" stroke="#0c0c0c" stroke-width="1.9" /><line x1="1241" y1="159" x2="1249" y2="159" stroke="#0c0c0c" stroke-width="1.9" /><text x="1232.5" y="176" font-size="10.5" fill="#0c0c0c" font-family="Liberation Mono, monospace" font-weight="bold" textLength="27.5" lengthAdjust="spacingAndGlyphs">SQL</text><path d="M924 143h13.5q3 0 3 3t-3 3h-2l-4 10.5h-12.5l-3-2.5h5l4-11q1-3-1-3z" fill="#fff" stroke="#0c0c0c" stroke-width="2.1" stroke-linejoin="round"/><circle cx="939.3" cy="145.8" r="1.5" fill="#fff" stroke="#0c0c0c" stroke-width="1.3" /><line x1="925.5" y1="148" x2="934" y2="148" stroke="#0c0c0c" stroke-width="1.9" /><line x1="924.3" y1="152" x2="932.8" y2="152" stroke="#0c0c0c" stroke-width="1.9" /><line x1="923" y1="156" x2="931" y2="156" stroke="#0c0c0c" stroke-width="1.9" /><text x="914.5" y="173" font-size="10.5" fill="#0c0c0c" font-family="Liberation Mono, monospace" font-weight="bold" textLength="27.5" lengthAdjust="spacingAndGlyphs">SQL</text><path d="M13.5 207.5l12-10.5v6.5h14v8h-14v6.5z" fill="#9fdcec" stroke="#2a6ad0" stroke-width="1.8" stroke-linejoin="round"/><path d="M58 208h14M70 196v24M64 200v16" fill="none" stroke="#dcdcdc" stroke-width="2.2" /><path d="M72 200l8 8-8 8z" fill="#e2e2e2" stroke="none" stroke-width="1" /><line x1="98.7" y1="190" x2="98.7" y2="227" stroke="#8c8c8c" stroke-width="1.6" /><g transform="translate(0,-2.2)"><path d="M116 197.5h13l7 7v18h-20z" fill="#fff" stroke="#111" stroke-width="1.8" stroke-linejoin="round"/><path d="M129 197.5v7h7" fill="none" stroke="#111" stroke-width="1.4" /><rect x="158" y="203" width="11" height="17" fill="#6a6aec" stroke="none" stroke-width="1" /><ellipse cx="163.5" cy="203" rx="5.8" ry="2.4" fill="#8080f4" stroke="#3a3ac0" stroke-width="1" /><ellipse cx="163.5" cy="208" rx="5.8" ry="2.4" fill="#8080f4" stroke="#3a3ac0" stroke-width="1" /><ellipse cx="163.5" cy="213" rx="5.8" ry="2.4" fill="#8080f4" stroke="#3a3ac0" stroke-width="1" /><ellipse cx="163.5" cy="218" rx="5.8" ry="2.4" fill="#8080f4" stroke="#3a3ac0" stroke-width="1" /><ellipse cx="163.5" cy="222" rx="5.8" ry="2.4" fill="#8080f4" stroke="#3a3ac0" stroke-width="1" /><rect x="168" y="196" width="12" height="22" fill="#e4e4dc" stroke="#999" stroke-width="1" /><path d="M172 206l11-11 3 3-11 11-4 1z" fill="#8a8a8a" stroke="#333" stroke-width="1.1" /><path d="M181 193l4-3M187 199l2 6M184 197l5-1" fill="none" stroke="#555" stroke-width="1.2" /><path d="M203 221v-17h8l2 3h10v14z" fill="#a8ac48" stroke="#111" stroke-width="1.5" stroke-linejoin="round"/><path d="M203 221l6-11h21l-7 11z" fill="#8c9a34" stroke="#111" stroke-width="1.5" stroke-linejoin="round"/><path d="M212 201q6-6 12-1" fill="none" stroke="#111" stroke-width="1.6" /><path d="M222 196l4 5-6 1z" fill="#111" stroke="none" stroke-width="1" /><rect x="275.5" y="197.5" width="24" height="24" fill="#c8c8b4" stroke="#6b6b3c" stroke-width="2.4" /><rect x="280.5" y="198.5" width="14" height="9" fill="#e9e9de" stroke="#6b6b3c" stroke-width="1.2" /><rect x="281.5" y="211.5" width="13" height="9" fill="#55552f" stroke="#6b6b3c" stroke-width="1" /><rect x="289.5" y="213.5" width="4" height="6" fill="#e0e0d0" stroke="none" stroke-width="1" /><ellipse cx="327.75" cy="215.2" rx="9.25" ry="3.2" fill="#fff" stroke="#222" stroke-width="1.5" /><ellipse cx="327.75" cy="209.7" rx="9.25" ry="3.2" fill="#fff" stroke="#222" stroke-width="1.5" /><ellipse cx="327.75" cy="204.2" rx="9.25" ry="3.2" fill="#fff" stroke="#222" stroke-width="1.5" /><path d="M331 215h9v-2.5l5 4.5-5 4.5v-2.5h-9z" fill="#2a4ae8" stroke="#1a2ab8" stroke-width="0.8" /></g><path d="M244 204h13.5l-6.75 7.5z" fill="#111" stroke="none" stroke-width="1" /><path d="M359.5 204h13.5l-6.75 7.5z" fill="#111" stroke="none" stroke-width="1" /><line x1="385" y1="190" x2="385" y2="227" stroke="#8c8c8c" stroke-width="1.6" /><rect x="390" y="187" width="43.5" height="41" fill="#cde4f7" stroke="#a9cdee" stroke-width="1" /><text x="398" y="203" font-size="15" fill="#111" font-family="Liberation Sans, sans-serif" >a</text><rect x="406" y="205.5" width="25" height="19" fill="#f4f01c" stroke="none" stroke-width="1" /><line x1="405.5" y1="203" x2="405.5" y2="226" stroke="#111" stroke-width="1.6" /><line x1="405.5" y1="205.5" x2="431" y2="205.5" stroke="#111" stroke-width="1" /><text x="408" y="221" font-size="16" fill="#111" font-family="Liberation Sans, sans-serif" >ac</text><rect x="444.5" y="196" width="24" height="22" fill="#fff" stroke="#222" stroke-width="1.8" /><line x1="456.5" y1="196" x2="456.5" y2="218" stroke="#222" stroke-width="1.8" /><path d="M485 204h13.5l-6.75 7.5z" fill="#111" stroke="none" stroke-width="1" /><path d="M520 193h12l7 6v17h-19z" fill="#fff" stroke="#333" stroke-width="1.5" stroke-linejoin="round"/><path d="M532 193v6h7" fill="#2ca02c" stroke="#333" stroke-width="1" /><path d="M524 202l8 8M532 202l-8 8" fill="none" stroke="#c82a2a" stroke-width="2" /><rect x="528" y="210" width="14" height="6" fill="#e04040" stroke="none" stroke-width="1" /><line x1="523" y1="198" x2="530" y2="198" stroke="#333" stroke-width="1.2" /><text x="546" y="219" font-size="11" fill="#777" font-family="Liberation Sans, sans-serif" >E</text><path d="M557.5 204h11l-5.5 6z" fill="#111" stroke="none" stroke-width="1" /><line x1="583" y1="190" x2="583" y2="227" stroke="#8c8c8c" stroke-width="1.6" /><path d="M600 197h21l-8 9v11l-5-2v-9z" fill="#333" stroke="#222" stroke-width="1" /><path d="M645 200h21l-8 8v10l-5-2v-8z" fill="#444" stroke="#333" stroke-width="1" /><path d="M641 196l29 21M670 196l-29 21" fill="none" stroke="#d83a3a" stroke-width="1.8" /><line x1="681.7" y1="190" x2="681.7" y2="227" stroke="#8c8c8c" stroke-width="1.6" /><rect x="687.5" y="187" width="43" height="41" fill="#cde4f7" stroke="#a9cdee" stroke-width="1" /><rect x="698.5" y="199.5" width="24.5" height="20" fill="#111" stroke="none" stroke-width="1" /><rect x="700.5" y="204" width="5.5" height="4" fill="#fff" stroke="none" stroke-width="1" /><rect x="708" y="204" width="13" height="4" fill="#fff" stroke="none" stroke-width="1" /><rect x="700.5" y="210.5" width="5.5" height="4" fill="#fff" stroke="none" stroke-width="1" /><rect x="708" y="210.5" width="13" height="4" fill="#fff" stroke="none" stroke-width="1" /><path d="M712 203.5l11-10 3 3-11 10-4 1z" fill="#b8b83a" stroke="#333" stroke-width="1.1" /><path d="M749 195h10.5l4.5 4.5v7l-4.5 4.5h-10.5l-4.5-4.5v-7z" fill="#e03a30" stroke="#a01a18" stroke-width="1" /><rect x="749.5" y="199.5" width="9.5" height="6.5" fill="#fff" stroke="none" stroke-width="1" /><line x1="754.3" y1="199.5" x2="754.3" y2="206" stroke="#e03a30" stroke-width="1.4" /><line x1="749.5" y1="202.7" x2="759" y2="202.7" stroke="#e03a30" stroke-width="1.2" /><text x="740.5" y="222.5" font-size="10.5" fill="#111" font-family="Liberation Sans, sans-serif" font-weight="bold" textLength="28" lengthAdjust="spacingAndGlyphs">#XY!</text><rect x="786.5" y="195.5" width="24.5" height="10.5" fill="#d4ec40" stroke="#222" stroke-width="1.5" /><rect x="786.5" y="206" width="24.5" height="14" fill="#a4a838" stroke="#222" stroke-width="1.5" /><rect x="790.5" y="199.5" width="16.5" height="3" fill="#222" stroke="none" stroke-width="1" /><path d="M796 199h5v11h4l-6.5 8-6.5-8h4z" fill="#5252f0" stroke="#2a2ac0" stroke-width="0.8" /><rect x="821.5" y="187" width="44.5" height="41" fill="#cde4f7" stroke="#a9cdee" stroke-width="1" /><text x="829" y="200" font-size="11" fill="#111" font-family="Liberation Sans, sans-serif" font-weight="bold">5</text><line x1="838" y1="195.5" x2="852" y2="195.5" stroke="#a02040" stroke-width="1.6" /><path d="M852 198l3 3 3-4" fill="none" stroke="#111" stroke-width="1.3" /><rect x="830" y="205" width="4" height="5" fill="#111" stroke="none" stroke-width="1" /><rect x="830" y="215" width="4" height="5" fill="#111" stroke="none" stroke-width="1" /><path d="M846 222v-14q0-6 6-6t6 6v14z" fill="#fff" stroke="#111" stroke-width="2.2" /><rect x="849" y="210" width="3" height="3" fill="#111" stroke="none" stroke-width="1" /><rect x="854" y="210" width="3" height="3" fill="#111" stroke="none" stroke-width="1" /><path d="M845 219h14" fill="none" stroke="#111" stroke-width="2.2" /><text x="883" y="216" font-size="23" fill="#5c5c5c" font-family="Liberation Sans, sans-serif" >&amp;</text><rect x="911.5" y="187" width="46.5" height="41" fill="#cde4f7" stroke="#a9cdee" stroke-width="1" /><path d="M919 203h5l7-7v24l-7-7h-5z" fill="#fff" stroke="#111" stroke-width="1.6" stroke-linejoin="round"/><path d="M935 200q4 8 0 16M939 196q7 12 0 24" fill="none" stroke="#111" stroke-width="1.5" /><text x="948" y="200" font-size="11" fill="#111" font-family="Liberation Sans, sans-serif" font-weight="bold">5</text><rect x="944" y="205" width="3" height="8" fill="#111" stroke="none" stroke-width="1" /><rect x="949" y="205" width="4" height="8" fill="none" stroke="#111" stroke-width="1.2" /><rect x="949" y="217" width="4" height="4" fill="#111" stroke="none" stroke-width="1" /><line x1="960.5" y1="190" x2="960.5" y2="227" stroke="#8c8c8c" stroke-width="1.6" /><rect x="973" y="204" width="18" height="18" fill="#fff" stroke="#d04848" stroke-width="1.6" /><path d="M977 209h8M982 205l4 4-4 4" fill="none" stroke="#d04848" stroke-width="1.6" /><rect x="984" y="200" width="17" height="20" fill="#fff" stroke="#9aa0d8" stroke-width="1.4" /><line x1="987" y1="206" x2="998" y2="206" stroke="#4a5ad0" stroke-width="1.5" /><line x1="987" y1="210" x2="998" y2="210" stroke="#4a5ad0" stroke-width="1.5" /><line x1="987" y1="214" x2="998" y2="214" stroke="#4a5ad0" stroke-width="1.5" /><line x1="1018" y1="195" x2="1047" y2="195" stroke="#111" stroke-width="1.6" stroke-dasharray="3 2"/><line x1="1018" y1="202" x2="1047" y2="202" stroke="#111" stroke-width="1.6" stroke-dasharray="3 2"/><line x1="1018" y1="214" x2="1047" y2="214" stroke="#111" stroke-width="1.6" stroke-dasharray="3 2"/><line x1="1018" y1="221" x2="1047" y2="221" stroke="#111" stroke-width="1.6" stroke-dasharray="3 2"/><line x1="1017" y1="208" x2="1048" y2="208" stroke="#111" stroke-width="2" /><path d="M1032.5 207v-10M1028.5 201l4-5 4 5M1032.5 209v10M1028.5 215l4 5 4-5" fill="none" stroke="#111" stroke-width="1.8" /><line x1="1059.5" y1="190" x2="1059.5" y2="227" stroke="#8c8c8c" stroke-width="1.6" /><rect x="1078" y="203" width="4.5" height="15" fill="#c8c850" stroke="#55551a" stroke-width="1.2" /><path d="M1092 203v15l-9-7.5z" fill="#5656dc" stroke="#2a2a9c" stroke-width="1" /><path d="M1099 203v15l-9-7.5z" fill="#5656dc" stroke="#2a2a9c" stroke-width="1" /><rect x="1126.5" y="203" width="4.5" height="15" fill="#c8c850" stroke="#55551a" stroke-width="1.2" /><path d="M1142 203v15l-11-7.5z" fill="#5656dc" stroke="#2a2a9c" stroke-width="1" /><path d="M1174 203v15l10.5-7.5z" fill="#62a050" stroke="#3a7030" stroke-width="1" /><path d="M1211 203v15l10-7.5z" fill="#5656dc" stroke="#2a2a9c" stroke-width="1" /><rect x="1222.5" y="203" width="4.5" height="15" fill="#c8c850" stroke="#55551a" stroke-width="1.2" /><rect x="1230" y="203" width="4.5" height="15" fill="#c8c850" stroke="#55551a" stroke-width="1.2" /><rect x="1261" y="203" width="15" height="13.5" fill="#b6b6b6" stroke="#a0a0a0" stroke-width="1" /><path d="M1304.5 203v15l10-7.5z" fill="#5656dc" stroke="#2a2a9c" stroke-width="1" /><rect x="1316" y="203" width="4.5" height="15" fill="#c8c850" stroke="#55551a" stroke-width="1.2" /><circle cx="1348" cy="210.5" r="3" fill="#5656dc" stroke="#2a2a9c" stroke-width="1" /><path d="M1350 203v15l11-7.5z" fill="#5656dc" stroke="#2a2a9c" stroke-width="1" /><rect x="1362" y="203" width="4.5" height="15" fill="#c8c850" stroke="#55551a" stroke-width="1.2" /><line x1="1383.4" y1="189" x2="1383.4" y2="226" stroke="#8c8c8c" stroke-width="1.6" /><ellipse cx="1409" cy="209" rx="10" ry="11" fill="#e8e040" stroke="#6a6a1a" stroke-width="1.2" /><circle cx="1405" cy="203" r="2" fill="#3a8a2a" stroke="none" stroke-width="1" /><circle cx="1412" cy="214" r="2.5" fill="#3a8a2a" stroke="none" stroke-width="1" /><path d="M1403 196l-3-3M1412 195l3-3" fill="none" stroke="#333" stroke-width="1.4" /><circle cx="1411" cy="209" r="11.5" fill="none" stroke="#d02a2a" stroke-width="2.2" /><line x1="1403" y1="201" x2="1419" y2="217" stroke="#d02a2a" stroke-width="2.2" /><line x1="1447" y1="196" x2="1467" y2="196" stroke="#cfcfcf" stroke-width="2" /><line x1="1447" y1="202" x2="1467" y2="202" stroke="#cfcfcf" stroke-width="2" /><line x1="1447" y1="208" x2="1467" y2="208" stroke="#cfcfcf" stroke-width="2" /><line x1="1447" y1="214" x2="1467" y2="214" stroke="#cfcfcf" stroke-width="2" /><line x1="1443" y1="193" x2="1443" y2="218" stroke="#d4d4d4" stroke-width="2" /><line x1="1439" y1="219" x2="1467" y2="219" stroke="#d4d4d4" stroke-width="2" /><rect x="1496" y="199" width="20" height="23" fill="#cdcdcd" stroke="none" stroke-width="1" /><rect x="1501" y="194" width="12" height="7" fill="#dedede" stroke="none" stroke-width="1" /><rect x="1500" y="203" width="17" height="17" fill="#dedede" stroke="none" stroke-width="1" /><path d="M1537 197h15l8 8v15h-23z" fill="#cdcdcd" stroke="none" stroke-width="1" /><path d="M1552 210l12 6-12 7z" fill="#dedede" stroke="none" stroke-width="1" /><path d="M1590 196h14v22h-14z" fill="#cdcdcd" stroke="none" stroke-width="1" /><path d="M1582 218h28v4h-28z" fill="#dedede" stroke="none" stroke-width="1" /><path d="M1602 198h8v20h-8z" fill="#dedede" stroke="none" stroke-width="1" /><rect x="1628" y="199" width="18" height="22" fill="#cdcdcd" stroke="none" stroke-width="1" /><path d="M1640 196l14-4v8l-10 8z" fill="#dedede" stroke="none" stroke-width="1" /><rect x="1630" y="203" width="8" height="8" fill="#dedede" stroke="none" stroke-width="1" /><rect x="1692" y="193" width="5" height="16" fill="#444" stroke="none" stroke-width="1" /><circle cx="1691" cy="214" r="10" fill="#dcdc3c" stroke="#a8a82a" stroke-width="1" /><circle cx="1688" cy="211" r="3" fill="#f4f4a0" stroke="none" stroke-width="1" /><path d="M70 606h21l-10.5 19z" fill="#ababab" stroke="none" stroke-width="1" /><path d="M113 606h21l-10.5 17z" fill="#ababab" stroke="none" stroke-width="1" /><rect x="113" y="626" width="21" height="5" fill="#ababab" stroke="none" stroke-width="1" /><circle cx="166" cy="617.5" r="14" fill="#b2b2b2" stroke="none" stroke-width="1" /><path d="M160 611.5l12 12M172 611.5l-12 12" fill="none" stroke="#f4f4f4" stroke-width="3" /><path d="M199 618a11 11 0 0 1 17-9" fill="none" stroke="#2e9e7e" stroke-width="3.4" /><path d="M212 603l9 5-8 6z" fill="#2e9e7e" stroke="none" stroke-width="1" /><path d="M221 616a11 11 0 0 1-17 9" fill="none" stroke="#2e9e7e" stroke-width="3.4" /><path d="M208 631l-9-5 8-6z" fill="#2e9e7e" stroke="none" stroke-width="1" /><line x1="235" y1="599" x2="235" y2="636" stroke="#8c8c8c" stroke-width="1.6" /><path d="M254 613l5-8h14l-3 8z" fill="#fff" stroke="#111" stroke-width="1.8" stroke-linejoin="round"/><path d="M249 626v-9l5-4h19l4 4v9z" fill="#fff" stroke="#111" stroke-width="1.8" stroke-linejoin="round"/><path d="M249 626l4 4h20l4-4M253 621h20" fill="none" stroke="#111" stroke-width="1.6" /><line x1="259" y1="608" x2="269" y2="608" stroke="#111" stroke-width="1.2" /><line x1="258" y1="611" x2="268" y2="611" stroke="#111" stroke-width="1.2" /><rect x="293.5" y="605" width="25" height="25" fill="#c8c8b4" stroke="#6b6b3c" stroke-width="2.4" /><rect x="298.5" y="606" width="15" height="9" fill="#e9e9de" stroke="#6b6b3c" stroke-width="1.2" /><rect x="299.5" y="620" width="14" height="9" fill="#55552f" stroke="#6b6b3c" stroke-width="1" /><rect x="308.5" y="622" width="4" height="6" fill="#e0e0d0" stroke="none" stroke-width="1" /><line x1="332.5" y1="599" x2="332.5" y2="636" stroke="#8c8c8c" stroke-width="1.6" /><rect x="350.5" y="609" width="5" height="15" fill="#e6e658" stroke="#55551a" stroke-width="1.2" /><path d="M367 609v15l-11-7.5z" fill="#4646e0" stroke="#2222a0" stroke-width="1" /><path d="M407 609v15l-11-7.5z" fill="#4646e0" stroke="#2222a0" stroke-width="1" /><path d="M442 609v16l12-8z" fill="#b4b4b4" stroke="none" stroke-width="1" /><rect x="470" y="596" width="40" height="39" fill="#e9f1f9" stroke="none" stroke-width="1" /><path d="M485.5 609v15l11-7.5z" fill="#4646e0" stroke="#2222a0" stroke-width="1" /><rect x="497" y="609" width="5" height="15" fill="#e6e658" stroke="#55551a" stroke-width="1.2" /><line x1="515.5" y1="599" x2="515.5" y2="636" stroke="#8c8c8c" stroke-width="1.6" /><path d="M535 617.5h17.5M543.7 609v17" fill="none" stroke="#ababab" stroke-width="5" /><rect x="577" y="603" width="24" height="24" fill="#c6c6c6" stroke="#a8a8a8" stroke-width="1" /><rect x="573" y="607" width="6" height="22" fill="#b8b8b8" stroke="none" stroke-width="1" /><line x1="585" y1="603" x2="585" y2="627" stroke="#a8a8a8" stroke-width="1.2" /><line x1="593" y1="603" x2="593" y2="627" stroke="#a8a8a8" stroke-width="1.2" /><line x1="577" y1="609" x2="601" y2="609" stroke="#a8a8a8" stroke-width="1.2" /><line x1="577" y1="615" x2="601" y2="615" stroke="#a8a8a8" stroke-width="1.2" /><line x1="577" y1="621" x2="601" y2="621" stroke="#a8a8a8" stroke-width="1.2" /><rect x="621" y="615" width="18" height="5" fill="#ababab" stroke="none" stroke-width="1" /><line x1="659" y1="604" x2="674" y2="604" stroke="#b8c4b8" stroke-width="2.4" /><line x1="659" y1="609" x2="674" y2="609" stroke="#b8c4b8" stroke-width="2.4" /><line x1="659" y1="614" x2="674" y2="614" stroke="#b8c4b8" stroke-width="2.4" /><path d="M664 617l6 12 16-26" fill="none" stroke="#a9cdb4" stroke-width="3.6" /><line x1="703" y1="605" x2="720" y2="605" stroke="#bcbcbc" stroke-width="2.4" /><line x1="703" y1="610" x2="720" y2="610" stroke="#bcbcbc" stroke-width="2.4" /><line x1="703" y1="615" x2="720" y2="615" stroke="#bcbcbc" stroke-width="2.4" /><path d="M716 614a8 8 0 0 1 12 6M726 630a8 8 0 0 1-10-4" fill="none" stroke="#b8b8c4" stroke-width="2.2" /><path d="M729 616v7h-7z" fill="#b8b8c4" stroke="none" stroke-width="1" /><line x1="742" y1="599" x2="742" y2="636" stroke="#8c8c8c" stroke-width="1.6" /><rect x="758" y="603" width="23" height="28" fill="none" stroke="#7a7a7a" stroke-width="1.6" /><rect x="761" y="606" width="17" height="6" fill="#f0f0f0" stroke="#7a7a7a" stroke-width="1.4" rx="3"/><rect x="761" y="614" width="17" height="6" fill="#f0f0f0" stroke="#7a7a7a" stroke-width="1.4" rx="3"/><rect x="761" y="622" width="17" height="6" fill="#f0f0f0" stroke="#7a7a7a" stroke-width="1.4" rx="3"/><line x1="755" y1="605" x2="758" y2="605" stroke="#7a7a7a" stroke-width="1.4" /><line x1="781" y1="605" x2="784" y2="605" stroke="#7a7a7a" stroke-width="1.4" /><line x1="755" y1="629" x2="758" y2="629" stroke="#7a7a7a" stroke-width="1.4" /><line x1="781" y1="629" x2="784" y2="629" stroke="#7a7a7a" stroke-width="1.4" /><line x1="796" y1="599" x2="796" y2="636" stroke="#8c8c8c" stroke-width="1.6" /><rect x="802.5" y="596" width="43" height="38" fill="#cde4f7" stroke="#a9cdee" stroke-width="1" /><path d="M810 605l4 3.5-4 3.5z" fill="#111" stroke="none" stroke-width="1" /><line x1="815" y1="610" x2="835" y2="610" stroke="#445" stroke-width="1.4" /><path d="M841 605v8l-6-4z" fill="#111" stroke="none" stroke-width="1" /><text x="810.5" y="631" font-size="15.5" fill="#1a1ab4" font-family="Liberation Sans, sans-serif" font-weight="bold" textLength="29" lengthAdjust="spacingAndGlyphs">Def</text><path d="M851 606l5 3.5-5 3.5z" fill="#4a4ac4" stroke="none" stroke-width="1" /><path d="M857 610h8l3-3h6" fill="none" stroke="#333" stroke-width="1.6" /><path d="M881 603v9l-6-4.5z" fill="#222" stroke="none" stroke-width="1" /><text x="862.5" y="631" font-size="15" fill="#4a4ac4" font-family="Liberation Sans, sans-serif" >D</text><path d="M895 606l5 3.5-5 3.5z" fill="#4a4ac4" stroke="none" stroke-width="1" /><path d="M901 610h8l3-3h6" fill="none" stroke="#333" stroke-width="1.6" /><path d="M925 603v9l-6-4.5z" fill="#222" stroke="none" stroke-width="1" /><circle cx="897" cy="609.5" r="2.5" fill="#4a4ac4" stroke="none" stroke-width="1" /><text x="905.5" y="631" font-size="15" fill="#4a4ac4" font-family="Liberation Sans, sans-serif" >N</text><path d="M937.5 606l5 3.5-5 3.5z" fill="#4a4ac4" stroke="none" stroke-width="1" /><path d="M943.5 610h8l3-3h6" fill="none" stroke="#333" stroke-width="1.6" /><path d="M967.5 603v9l-6-4.5z" fill="#222" stroke="none" stroke-width="1" /><circle cx="940" cy="609.5" r="2.5" fill="#4a4ac4" stroke="none" stroke-width="1" /><text x="937" y="631" font-size="15" fill="#4a4ac4" font-family="Liberation Sans, sans-serif" textLength="30" lengthAdjust="spacingAndGlyphs">N&amp;D</text><line x1="978.7" y1="599" x2="978.7" y2="636" stroke="#8c8c8c" stroke-width="1.6" /><rect x="986" y="596" width="40" height="38" fill="#cde4f7" stroke="#a9cdee" stroke-width="1" /><line x1="995" y1="607.5" x2="1021" y2="607.5" stroke="#2a2ad4" stroke-width="3" stroke-dasharray="5 1.5 14 1.5 4 0"/><line x1="995" y1="612.5" x2="1021" y2="612.5" stroke="#2a2ad4" stroke-width="3" stroke-dasharray="5 1.5 14 1.5 4 0"/><line x1="995" y1="617.5" x2="1021" y2="617.5" stroke="#2a2ad4" stroke-width="3" stroke-dasharray="5 1.5 14 1.5 4 0"/><line x1="995" y1="622.5" x2="1021" y2="622.5" stroke="#2a2ad4" stroke-width="3" stroke-dasharray="5 1.5 14 1.5 4 0"/><line x1="995" y1="627.5" x2="1021" y2="627.5" stroke="#2a2ad4" stroke-width="3" stroke-dasharray="5 1.5 14 1.5 4 0"/><rect x="1049" y="605" width="13" height="6" fill="none" stroke="#4a4ad0" stroke-width="1.5" /><rect x="1043" y="614" width="19" height="6" fill="none" stroke="#4a4ad0" stroke-width="1.5" /><rect x="1049" y="623" width="13" height="6" fill="none" stroke="#4a4ad0" stroke-width="1.5" /><path d="M1036 617h7M1049 608h-4v18h4" fill="none" stroke="#4a4ad0" stroke-width="1.5" /><line x1="1076" y1="599" x2="1076" y2="636" stroke="#8c8c8c" stroke-width="1.6" /><line x1="1088" y1="603.5" x2="1117" y2="603.5" stroke="#111" stroke-width="1.6" stroke-dasharray="3 2"/><line x1="1088" y1="609.5" x2="1117" y2="609.5" stroke="#111" stroke-width="1.6" stroke-dasharray="3 2"/><line x1="1088" y1="623" x2="1117" y2="623" stroke="#111" stroke-width="1.6" stroke-dasharray="3 2"/><line x1="1088" y1="629" x2="1117" y2="629" stroke="#111" stroke-width="1.6" stroke-dasharray="3 2"/><line x1="1087" y1="616.5" x2="1118" y2="616.5" stroke="#111" stroke-width="2" /><path d="M1102.5 615v-10M1098.5 609l4-5 4 5M1102.5 618v10M1098.5 624l4 5 4-5" fill="none" stroke="#111" stroke-width="1.8" /><line x1="1130" y1="599" x2="1130" y2="636" stroke="#8c8c8c" stroke-width="1.6" /><path d="M1431.5 612l4.5-6 4.5 6z" fill="#8a8a8a" stroke="none" stroke-width="1" /><path d="M1431.5 621l4.5 6 4.5-6z" fill="#8a8a8a" stroke="none" stroke-width="1" /><path d="M23.5 1277.5h13.5q3 0 3 3t-3 3h-2l-4 10.5h-12.5l-3-2.5h5l4-11q1-3-1-3z" fill="#fff" stroke="#0c0c0c" stroke-width="2.1" stroke-linejoin="round"/><circle cx="38.8" cy="1280.3" r="1.5" fill="#fff" stroke="#0c0c0c" stroke-width="1.3" /><line x1="25.0" y1="1282.5" x2="33.5" y2="1282.5" stroke="#0c0c0c" stroke-width="1.9" /><line x1="23.8" y1="1286.5" x2="32.3" y2="1286.5" stroke="#0c0c0c" stroke-width="1.9" /><line x1="22.5" y1="1290.5" x2="30.5" y2="1290.5" stroke="#0c0c0c" stroke-width="1.9" /><text x="14.0" y="1307.5" font-size="10.5" fill="#0c0c0c" font-family="Liberation Mono, monospace" font-weight="bold" textLength="27.5" lengthAdjust="spacingAndGlyphs">SQL</text><path d="M295.5 1279.5h13.5q3 0 3 3t-3 3h-2l-4 10.5h-12.5l-3-2.5h5l4-11q1-3-1-3z" fill="#fff" stroke="#0c0c0c" stroke-width="2.1" stroke-linejoin="round"/><circle cx="310.8" cy="1282.3" r="1.5" fill="#fff" stroke="#0c0c0c" stroke-width="1.3" /><line x1="297.0" y1="1284.5" x2="305.5" y2="1284.5" stroke="#0c0c0c" stroke-width="1.9" /><line x1="295.8" y1="1288.5" x2="304.3" y2="1288.5" stroke="#0c0c0c" stroke-width="1.9" /><line x1="294.5" y1="1292.5" x2="302.5" y2="1292.5" stroke="#0c0c0c" stroke-width="1.9" /><text x="286.0" y="1309.5" font-size="10.5" fill="#0c0c0c" font-family="Liberation Mono, monospace" font-weight="bold" textLength="27.5" lengthAdjust="spacingAndGlyphs">SQL</text><path d="M147 1277h4v5M147 1290v8h4" fill="none" stroke="#111" stroke-width="1.5" /><line x1="154" y1="1278.5" x2="170" y2="1278.5" stroke="#111" stroke-width="1.6" /><path d="M170 1280l3 3 4-4" fill="none" stroke="#111" stroke-width="1.2" /><rect x="147" y="1284" width="3.5" height="4" fill="#111" stroke="none" stroke-width="1" /><rect x="147" y="1300" width="3.5" height="4" fill="#111" stroke="none" stroke-width="1" /><path d="M160 1306v-14q0-5 5-5h3l4 4v15z" fill="#fff" stroke="#111" stroke-width="2" stroke-linejoin="round"/><rect x="163" y="1293" width="2.5" height="3" fill="#111" stroke="none" stroke-width="1" /><rect x="168" y="1293" width="2.5" height="3" fill="#111" stroke="none" stroke-width="1" /><rect x="163" y="1299" width="2.5" height="3" fill="#111" stroke="none" stroke-width="1" /><rect x="168" y="1299" width="2.5" height="3" fill="#111" stroke="none" stroke-width="1" /><circle cx="19.4" cy="246.8" r="3.3" fill="#3ccc2c" stroke="#1a7a1a" stroke-width="0.8" /><rect x="17.6" y="252.6" width="19" height="13" fill="#111" stroke="none" stroke-width="1" /><rect x="20" y="255" width="3.6" height="3.4" fill="#86e468" stroke="none" stroke-width="1" /><rect x="20" y="260.4" width="3.6" height="3.4" fill="#86e468" stroke="none" stroke-width="1" /><rect x="25.6" y="255" width="3.6" height="3.4" fill="#86e468" stroke="none" stroke-width="1" /><rect x="25.6" y="260.4" width="3.6" height="3.4" fill="#86e468" stroke="none" stroke-width="1" /><rect x="31.2" y="255" width="3.6" height="3.4" fill="#86e468" stroke="none" stroke-width="1" /><rect x="31.2" y="260.4" width="3.6" height="3.4" fill="#86e468" stroke="none" stroke-width="1" /></svg>
<div class="abs" style="left:59px;top:219px;width:1421px;height:141px;border:3px solid #fa2e2e"></div>
<div class="abs" style="left:20px;top:766px;width:645px;height:506px;border:3px solid #fa2e2e"></div>
</body></html>
